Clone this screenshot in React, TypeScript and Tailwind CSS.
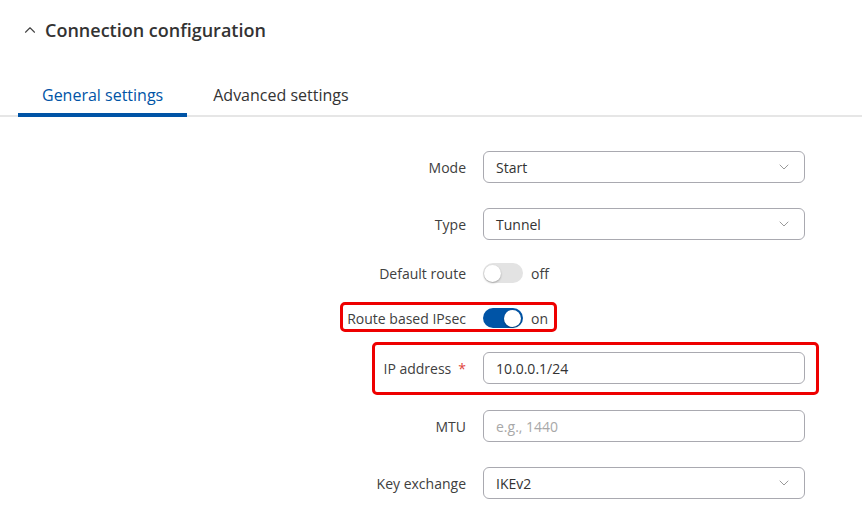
import { ChevronDown, ChevronUp } from 'lucide-react';

function Label({ children, required }: { children: React.ReactNode; required?: boolean }) {
  return (
    <div className="w-[466px] shrink-0 text-right text-[14px] text-[#404040]">
      {children}
      {required && <span className="ml-[7px] text-[#e0463c]">*</span>}
    </div>
  );
}

function Select({ value }: { value: string }) {
  return (
    <div className="ml-[17px] flex h-[32px] w-[322px] items-center justify-between rounded-[6px] border border-[#a9a9b0] px-3 text-[14px] text-[#333]">
      <span>{value}</span>
      <ChevronDown className="h-4 w-4 text-[#9a9a9a]" strokeWidth={1.5} />
    </div>
  );
}

function Input({ value, placeholder }: { value?: string; placeholder?: string }) {
  return (
    <div className="ml-[17px] flex h-[32px] w-[322px] items-center rounded-[6px] border border-[#a9a9b0] px-3 text-[14px]">
      {value ? <span className="text-[#333]">{value}</span> : <span className="text-[#a8a8a8]">{placeholder}</span>}
    </div>
  );
}

function Toggle({ on }: { on: boolean }) {
  return (
    <div className="ml-[17px] flex items-center gap-2 text-[14px] text-[#404040]">
      <div
        className={
          on
            ? 'flex h-[20px] w-[40px] items-center justify-end rounded-full bg-[#0054a6] px-[2px]'
            : 'flex h-[20px] w-[40px] items-center justify-start rounded-full bg-[#e3e3e3] px-[1px]'
        }
      >
        <div className="h-[17px] w-[17px] rounded-full bg-white shadow-[0_1px_2px_rgba(0,0,0,0.3)]" />
      </div>
      <span>{on ? 'on' : 'off'}</span>
    </div>
  );
}

export default function App() {
  return (
    <div className="h-[531px] w-[862px] overflow-hidden bg-white font-['Open_Sans',sans-serif]">
      {/* Section header */}
      <div className="flex h-[60px] items-center pl-[21px]">
        <ChevronUp className="h-[18px] w-[18px] text-[#444]" strokeWidth={1.5} />
        <h2 className="ml-[6px] text-[18px] font-semibold text-[#333]">Connection configuration</h2>
      </div>

      {/* Tabs */}
      <div className="mt-[18px] flex border-b-2 border-[#e6e6e6] pl-[18px]">
        <div className="-mb-[2px] border-b-4 border-[#0054a6] px-[24px] pb-[6px] pt-[5px] text-[16px] text-[#0054a6]">
          General settings
        </div>
        <div className="px-[26px] pb-[6px] pt-[5px] text-[16px] text-[#333]">Advanced settings</div>
      </div>

      {/* Form */}
      <div className="flex flex-col">
        <div className="mt-[34px] flex items-center">
          <Label>Mode</Label>
          <Select value="Start" />
        </div>
        <div className="mt-[25px] flex items-center">
          <Label>Type</Label>
          <Select value="Tunnel" />
        </div>
        <div className="mt-[23px] flex h-[20px] items-center">
          <Label>Default route</Label>
          <Toggle on={false} />
        </div>
        <div className="relative mt-[25px] flex h-[20px] items-center">
          <Label>Route based IPsec</Label>
          <Toggle on />
          <div className="pointer-events-none absolute left-[340px] top-[-6px] h-[30px] w-[217px] rounded-[5px] border-[3px] border-[#ee0000]" />
        </div>
        <div className="relative mt-[24px] flex items-center">
          <Label required>IP address</Label>
          <Input value="10.0.0.1/24" />
          <div className="pointer-events-none absolute left-[372px] top-[-10px] h-[53px] w-[447px] rounded-[5px] border-[3px] border-[#ee0000]" />
        </div>
        <div className="mt-[26px] flex items-center">
          <Label>MTU</Label>
          <Input placeholder="e.g., 1440" />
        </div>
        <div className="mt-[25px] flex items-center">
          <Label>Key exchange</Label>
          <Select value="IKEv2" />
        </div>
      </div>
    </div>
  );
}
